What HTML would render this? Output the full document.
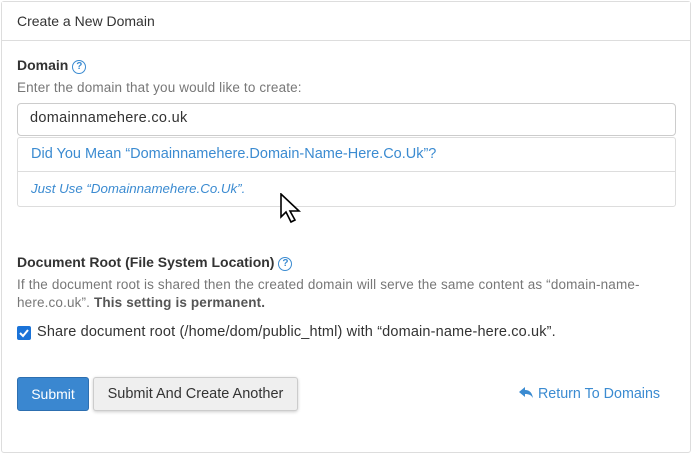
<!DOCTYPE html>
<html><head><style>
*{box-sizing:border-box;margin:0;padding:0}
body{width:692px;height:454px;background:#fff;font-family:"Liberation Sans",sans-serif;color:#333;position:relative;overflow:hidden}
.panel{position:absolute;left:1px;top:1px;width:690px;height:452px;border:1px solid #ddd;border-radius:3px}
.hd{position:absolute;left:0;top:0;width:688px;height:39px;border-bottom:1px solid #ddd;background:#fff}
.t{position:absolute;white-space:nowrap}
.q{display:inline-block;width:14px;height:14px;border:1.5px solid #3b8bd1;border-radius:50%;color:#3b8bd1;font-size:10px;font-weight:bold;text-align:center;line-height:11px;vertical-align:1px;margin-left:4px}
.inp{position:absolute;left:17px;top:103px;width:659px;height:33px;border:1px solid #ccc;border-radius:4px}
.sug{position:absolute;left:17px;top:137px;width:659px;height:70px;border:1px solid #ddd;border-radius:3px}
.sug .dv{position:absolute;left:0;top:33px;width:100%;border-top:1px solid #ddd}
.btn{position:absolute;top:377px;height:34px;border-radius:3px;font-size:14px;text-align:center;line-height:32px}
</style></head><body>
<div class="panel"><div class="hd"></div></div>
<div class="t" style="left:17px;top:13px;font-size:14px;color:#333">Create a New Domain</div>
<div class="t" style="left:17px;top:57px;font-size:14px;font-weight:bold">Domain<span class="q">?</span></div>
<div class="t" style="left:17px;top:80px;font-size:13.5px;color:#777;letter-spacing:0.15px">Enter the domain that you would like to create:</div>
<div class="inp"></div>
<div class="t" style="left:30px;top:110px;font-size:14.5px;color:#333;letter-spacing:0.3px">domainnamehere.co.uk</div>
<div class="sug"><div class="dv"></div></div>
<div class="t" style="left:31px;top:146px;font-size:14.5px;color:#3b8bd1">Did You Mean “Domainnamehere.Domain-Name-Here.Co.Uk”?</div>
<div class="t" style="left:31px;top:181px;font-size:13.3px;color:#3b8bd1;font-style:italic">Just Use “Domainnamehere.Co.Uk”.</div>
<svg style="position:absolute;left:280px;top:193px" width="22" height="36" viewBox="0 0 22 36"><path d="M1 1 L1 24 L6 19 L11 29 L15 27 L10 18 L19 18 Z" fill="#fff" stroke="#000" stroke-width="1.6" stroke-linejoin="miter"/></svg>
<div class="t" style="left:17px;top:254px;font-size:14px;font-weight:bold">Document Root (File System Location)<span class="q">?</span></div>
<div class="t" style="left:17px;top:276px;font-size:13.5px;color:#777;line-height:18px;letter-spacing:0.15px">If the document root is shared then the created domain will serve the same content as “domain-name-<br>here.co.uk”. <b style="color:#555">This setting is permanent.</b></div>
<div style="position:absolute;left:17px;top:326px;width:14px;height:14px;background:#1a73d8;border-radius:2px"><svg width="14" height="14"><path d="M3 7 L6 10 L11 4" stroke="#fff" stroke-width="2" fill="none"/></svg></div>
<div class="t" style="left:37px;top:324px;font-size:14.5px;color:#333;letter-spacing:0.15px">Share document root (/home/dom/public_html) with “domain-name-here.co.uk”.</div>
<div class="btn" style="left:17px;width:72px;background:#3a87d0;border:1px solid #2d6fb0;color:#fff">Submit</div>
<div class="btn" style="left:93px;width:205px;background:#efefef;border:1px solid #ccc;color:#333;box-shadow:0 1px 3px rgba(0,0,0,.2);font-size:14.5px">Submit And Create Another</div>
<div class="t" style="left:519px;top:386px;font-size:14.3px;color:#3b8bd1"><svg width="15" height="13" viewBox="0 0 15 13" style="vertical-align:-1px"><path d="M6 1 L0 6 L6 11 L6 8 C10 8 12 9 14 12 C13 7 11 4 6 4 Z" fill="#3b8bd1"/></svg> Return To Domains</div>
</body></html>
